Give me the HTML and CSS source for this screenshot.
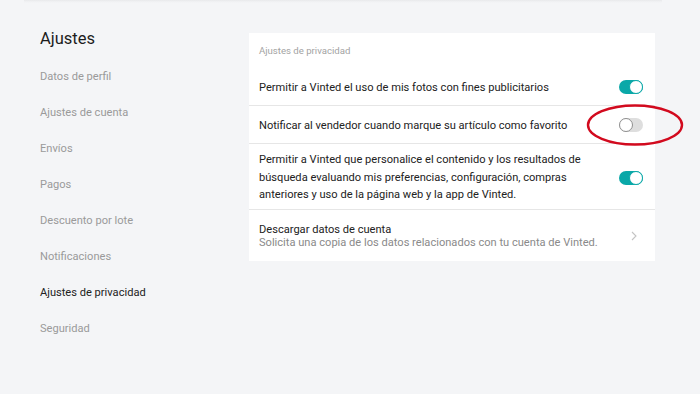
FILE: index.html
```html
<!DOCTYPE html>
<html lang="es">
<head>
<meta charset="utf-8">
<link rel="stylesheet" href="styles.css">
</head>
<body>
<div class="topline"></div>
<div class="layout">
  <nav class="sidebar">
    <h1 class="side-title">Ajustes</h1>
    <ul class="side-menu">
      <li>Datos de perfil</li>
      <li>Ajustes de cuenta</li>
      <li>Envíos</li>
      <li>Pagos</li>
      <li>Descuento por lote</li>
      <li>Notificaciones</li>
      <li class="active">Ajustes de privacidad</li>
      <li>Seguridad</li>
    </ul>
  </nav>
  <section class="card">
    <div class="card-head">Ajustes de privacidad</div>
    <div class="row row-single">
      <span class="row-text">Permitir a Vinted el uso de mis fotos con fines publicitarios</span>
      <span class="toggle on"><span class="knob"></span></span>
    </div>
    <div class="row row-single">
      <span class="row-text">Notificar al vendedor cuando marque su artículo como favorito</span>
      <span class="toggle off"><span class="knob"></span></span>
      <svg class="highlight" width="98" height="42" viewBox="0 0 98 42"><ellipse cx="49" cy="21" rx="47" ry="19.5" fill="none" stroke="#d20a1e" stroke-width="2.4"/></svg>
    </div>
    <div class="row row-multi">
      <span class="row-text">Permitir a Vinted que personalice el contenido y los resultados de búsqueda evaluando mis preferencias, configuración, compras anteriores y uso de la página web y la app de Vinted.</span>
      <span class="toggle on"><span class="knob"></span></span>
    </div>
    <div class="row row-link">
      <div class="row-text">
        <div class="link-title">Descargar datos de cuenta</div>
        <div class="link-sub">Solicita una copia de los datos relacionados con tu cuenta de Vinted.</div>
      </div>
      <svg class="chevron" width="8" height="12" viewBox="0 0 8 12"><path d="M2 2 L6 6 L2 10" fill="none" stroke="#c4c4c4" stroke-width="1.1"/></svg>
    </div>
  </section>
</div>
</body>
</html>
```

FILE: styles.css
```css
* { box-sizing: border-box; }
html, body { margin: 0; padding: 0; }
body {
  background: #f4f5f7;
  font-family: Roboto, "Liberation Sans", sans-serif;
  color: #2b2b2b;
  width: 700px;
  height: 394px;
  overflow: hidden;
}
.topline {
  margin: 0 38px 0 24px;
  height: 3px;
  background: linear-gradient(#e8e9eb, #f1f2f4 60%, #f4f5f7);
}
.layout {
  display: flex;
  align-items: flex-start;
  padding-top: 30px;
}
.sidebar {
  width: 249px;
  padding-left: 40px;
}
.side-title {
  margin: -4px 0 0;
  font-size: 16.5px;
  font-weight: 400;
  color: #1c1c1c;
  line-height: 20px;
  height: 30px;
}
.side-menu {
  list-style: none;
  margin: 0;
  padding: 0;
}
.side-menu li {
  font-size: 11.1px;
  color: #9a9a9a;
  height: 36px;
  line-height: 36px;
}
.side-menu li.active { color: #222; }
.card {
  width: 406px;
  background: #fff;
  font-size: 11.1px;
}
.card-head {
  height: 35px;
  padding: 12px 10px 0;
  font-size: 9.6px;
  color: #a3a3a3;
}
.row {
  display: flex;
  align-items: center;
  justify-content: space-between;
  padding: 1px 10px 0;
  position: relative;
  border-bottom: 1px solid #e6e6e6;
}
.row:last-child { border-bottom: none; }
.row-single { height: 38px; }
.row-multi { height: 66px; line-height: 17.5px; padding-top: 2px; }
.row-link { height: 51px; line-height: 13px; padding-top: 1px; }
.row-text { color: #222; }
.row-multi .row-text { width: 340px; }
.link-sub { color: #8a8a8a; }
.toggle {
  width: 24px;
  height: 14px;
  border-radius: 7px;
  position: relative;
  flex: none;
  margin-right: 2px;
}
.toggle.on { background: #0aa8a8; }
.toggle.off { background: #dedede; }
.knob {
  position: absolute;
  top: 0;
  width: 14px;
  height: 14px;
  border-radius: 50%;
  background: #fff;
}
.toggle.on .knob { right: 0; border: 1.5px solid #0aa8a8; }
.toggle.off .knob { left: 0; border: 1px solid #8f8f8f; }
.highlight {
  position: absolute;
  left: 337px;
  top: -2px;
}
.chevron { flex: none; margin-right: 7px; }
```
